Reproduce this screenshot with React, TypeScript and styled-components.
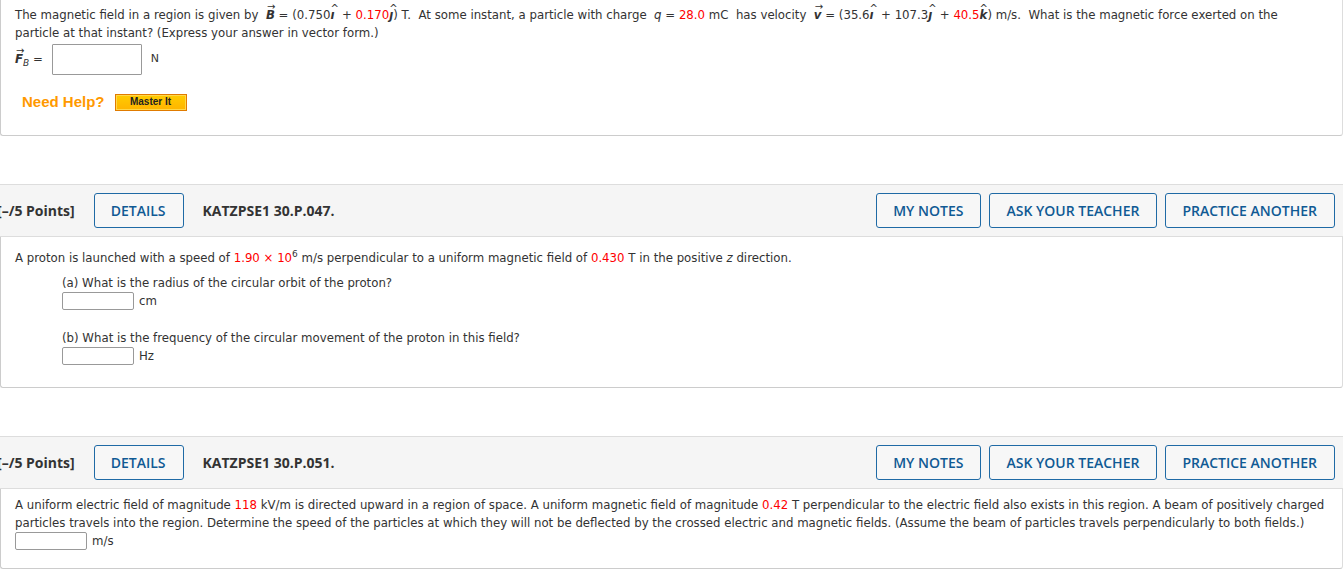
import React from "react";
import styled, { createGlobalStyle } from "styled-components";

const Global = createGlobalStyle`
  html, body { margin: 0; padding: 0; background: #fff; }
  body { font-family: "DejaVu Sans", Verdana, sans-serif; color: #333; overflow: hidden; }
`;

const Page = styled.div`
  width: 1343px;
  display: flex;
  flex-direction: column;
`;

const Card = styled.div`
  border: 1px solid #ccc;
  border-top: none;
  border-right-color: #ddd;
  border-radius: 0 0 3px 3px;
  padding: 6px 10px 0 14px;
  font-size: 11.75px;
  line-height: 18px;
`;

const TopCard = styled(Card)`
  height: 129px;
  padding-top: 6px;
  padding-right: 40px;
`;

const BodyCard = styled(Card)<{ $h: number; $pt: number }>`
  height: ${(p) => p.$h}px;
  box-sizing: border-box;
  padding-top: ${(p) => p.$pt}px;
`;

const Para = styled.p`
  margin: 0;
`;

const Red = styled.span`
  color: #f00;
`;

const Sym = styled.span`
  position: relative;
  display: inline-block;
  font-weight: bold;
  font-style: italic;
  line-height: 13px;
`;

const Over = styled.span<{ $top: number; $left: number }>`
  position: absolute;
  top: ${(p) => p.$top}px;
  left: ${(p) => p.$left}px;
  font-size: 10px;
  font-style: normal;
  font-weight: normal;
  line-height: 10px;
`;

const Ital = styled.span`
  font-style: italic;
`;

const SubB = styled.sub`
  font-size: 9px;
  font-weight: normal;
  line-height: 0;
`;

const AnswerRow = styled.div`
  display: flex;
  align-items: center;
  gap: 9px;
  margin-top: 1px;
  height: 32px;
`;

const BigInput = styled.div`
  width: 88px;
  height: 29px;
  border: 1px solid #999;
  border-radius: 1px;
`;

const Unit = styled.span`
  font-size: 11px;
`;

const HelpRow = styled.div`
  display: flex;
  align-items: center;
  gap: 10px;
  margin-top: 18px;
  padding-left: 7px;
`;

const NeedHelp = styled.span`
  font-family: "Liberation Sans", Arial, sans-serif;
  font-weight: bold;
  font-size: 15px;
  color: #f90;
`;

const MasterBtn = styled.span`
  display: inline-flex;
  align-items: center;
  justify-content: center;
  width: 72px;
  height: 17px;
  box-sizing: border-box;
  background: linear-gradient(#ffcc00, #ffb400);
  border: 1px solid #e07b00;
  box-shadow: inset 0 0 0 1px #ffd84a;
  font-family: "Liberation Sans", Arial, sans-serif;
  font-weight: bold;
  font-size: 10px;
  color: #222;
`;

const Header = styled.div`
  height: 53px;
  box-sizing: border-box;
  border-top: 1px solid #ddd;
  border-bottom: 1px solid #ddd;
  background: #f5f5f5;
  display: flex;
  align-items: center;
  font-family: "Open Sans", sans-serif;
  font-size: 14px;
`;

const Points = styled.span`
  font-weight: bold;
  color: #333;
  margin-left: -3px;
  margin-right: 19px;
`;

const Btn = styled.span`
  display: inline-flex;
  align-items: center;
  height: 35px;
  box-sizing: border-box;
  padding: 0 17px 0 16px;
  border: 1px solid #1f6aa5;
  border-radius: 3px;
  color: #105a94;
  font-weight: 600;
  font-size: 14px;
  background: #f7f7f7;
`;

const Code = styled.span`
  font-weight: bold;
  color: #333;
  margin-left: 19px;
  flex: 1;
`;

const BtnGroup = styled.div`
  display: flex;
  gap: 8px;
  margin-right: 8px;
`;

const Part = styled.div`
  padding-left: 47px;
`;

const PartQ = styled.div`
  margin-top: 7px;
`;

const SmallRow = styled.div`
  display: flex;
  align-items: center;
  gap: 5px;
  height: 18px;
`;

const SmallInput = styled.div`
  width: 72px;
  height: 18px;
  box-sizing: border-box;
  border: 1px solid #999;
  border-radius: 2px;
`;

const Sup = styled.sup`
  font-size: 9px;
  line-height: 0;
`;

const Spacer = styled.div<{ $h: number }>`
  height: ${(p) => p.$h}px;
`;

function Vec({ s, sub }: { s: string; sub?: string }) {
  return (
    <Sym>
      <Over $top={-7} $left={1}>→</Over>
      {s}
      {sub && <SubB>{sub}</SubB>}
    </Sym>
  );
}

function Hat({ s }: { s: string }) {
  return (
    <Sym>
      <Over $top={-5} $left={0}>^</Over>
      {s}
    </Sym>
  );
}

function QHeader({ code }: { code: string }) {
  return (
    <Header>
      <Points>[–/5 Points]</Points>
      <Btn>DETAILS</Btn>
      <Code>{code}</Code>
      <BtnGroup>
        <Btn>MY NOTES</Btn>
        <Btn>ASK YOUR TEACHER</Btn>
        <Btn>PRACTICE ANOTHER</Btn>
      </BtnGroup>
    </Header>
  );
}

export default function App() {
  return (
    <Page>
      <Global />
      <TopCard>
        <Para>
          The magnetic field in a region is given by&nbsp; <Vec s="B" /> = (0.750<Hat s="ı" />&nbsp; + <Red>0.170</Red>
          <Hat s="ȷ" />) T.&nbsp; At some instant, a particle with charge&nbsp; <Ital>q</Ital> = <Red>28.0</Red> mC&nbsp; has
          velocity&nbsp; <Vec s="v" /> = (35.6<Hat s="ı" />&nbsp; + 107.3<Hat s="ȷ" />&nbsp; + <Red>40.5</Red>
          <Hat s="k" />) m/s.&nbsp; What is the magnetic force exerted on the particle at that instant? (Express your answer
          in vector form.)
        </Para>
        <AnswerRow>
          <span>
            <Vec s="F" sub="B" /> =
          </span>
          <BigInput />
          <Unit>N</Unit>
        </AnswerRow>
        <HelpRow>
          <NeedHelp>Need Help?</NeedHelp>
          <MasterBtn>Master It</MasterBtn>
        </HelpRow>
      </TopCard>
      <Spacer $h={48} />
      <QHeader code="KATZPSE1 30.P.047." />
      <BodyCard $h={151} $pt={12}>
        <Para>
          A proton is launched with a speed of <Red>1.90 × 10</Red>
          <Sup>6</Sup> m/s perpendicular to a uniform magnetic field of <Red>0.430</Red> T in the positive <Ital>z</Ital>{" "}
          direction.
        </Para>
        <Part>
          <PartQ>(a) What is the radius of the circular orbit of the proton?</PartQ>
          <SmallRow>
            <SmallInput />
            <span>cm</span>
          </SmallRow>
          <Spacer $h={12} />
          <PartQ>(b) What is the frequency of the circular movement of the proton in this field?</PartQ>
          <SmallRow>
            <SmallInput />
            <span>Hz</span>
          </SmallRow>
        </Part>
      </BodyCard>
      <Spacer $h={48} />
      <QHeader code="KATZPSE1 30.P.051." />
      <BodyCard $h={80} $pt={7}>
        <Para>
          A uniform electric field of magnitude <Red>118</Red> kV/m is directed upward in a region of space. A uniform
          magnetic field of magnitude <Red>0.42</Red> T perpendicular to the electric field also exists in this region. A
          beam of positively charged particles travels into the region. Determine the speed of the particles at which they
          will not be deflected by the crossed electric and magnetic fields. (Assume the beam of particles travels
          perpendicularly to both fields.)
        </Para>
        <SmallRow>
          <SmallInput />
          <span>m/s</span>
        </SmallRow>
      </BodyCard>
    </Page>
  );
}
